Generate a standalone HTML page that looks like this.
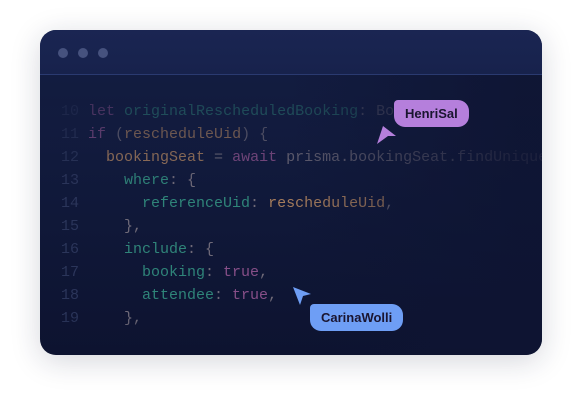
<!DOCTYPE html><html><head><style>
body{margin:0;width:582px;height:406px;background:#fff;position:relative;overflow:hidden;font-family:"Liberation Sans",sans-serif}
.win{position:absolute;left:40px;top:30px;width:502px;height:325px;border-radius:16px;background:linear-gradient(180deg,#16214a 0%,#111a3c 40%,#0d1330 100%);box-shadow:0 6px 30px rgba(20,30,60,.18);overflow:hidden}
.hd{height:44px;border-bottom:1px solid #2a3a70;background:linear-gradient(180deg,#1a2552,#17224c)}
.dot{position:absolute;top:18px;width:10px;height:10px;border-radius:50%;background:#46527e}
.code{position:absolute;left:0;top:70px;font-family:"Liberation Mono",monospace;font-size:15px;line-height:23px;white-space:pre;color:#6f6a78}
.n{display:inline-block;width:39px;text-align:right;color:#2b355a}
.k{color:#874f88}.t{color:#2f8479}.o{color:#a57c5c}.g{color:#6f6a78}
.fade{position:absolute;left:0;right:0;top:45px;bottom:0;background:linear-gradient(90deg,rgba(14,20,50,0) 50%,rgba(14,20,50,.8) 95%),linear-gradient(180deg,rgba(17,26,60,.6) 10%,rgba(17,26,60,.3) 25%,rgba(17,26,60,0) 40%,rgba(14,20,48,0) 85%,rgba(13,19,48,.45) 100%);pointer-events:none}
.b{position:absolute;font-size:13px;font-weight:bold;color:#1a1530;padding:0 11px;height:27px;line-height:27px;border-radius:11px}
</style></head><body>
<div class="win"><div class="hd"></div>
<div class="dot" style="left:18px"></div><div class="dot" style="left:38px"></div><div class="dot" style="left:58px"></div>
<div class="code"><span class="n">10</span> <span class="k">let</span> <span class="t">originalRescheduledBooking</span>: <span class="g">Booking</span>
<span class="n">11</span> <span class="k">if</span> (<span class="o">rescheduleUid</span>) {
<span class="n">12</span>   <span class="o">bookingSeat</span> = <span class="k">await</span> prisma.bookingSeat.findUnique
<span class="n">13</span>     <span class="t">where</span>: {
<span class="n">14</span>       <span class="t">referenceUid</span>: <span class="o">rescheduleUid</span>,
<span class="n">15</span>     },
<span class="n">16</span>     <span class="t">include</span>: {
<span class="n">17</span>       <span class="t">booking</span>: <span class="k">true</span>,
<span class="n">18</span>       <span class="t">attendee</span>: <span class="k">true</span>,
<span class="n">19</span>     },</div>
<div class="fade"></div>
</div>
<svg style="position:absolute;left:374px;top:124px" width="24" height="22"><path d="M9 2 L22 12 L14 12 L3 20 Z" fill="#b57fdc"/></svg>
<div class="b" style="left:394px;top:100px;background:#b57fdc;border-top-left-radius:4px">HenriSal</div>
<svg style="position:absolute;left:290px;top:284px" width="24" height="24"><path d="M3 3 L21 10 L13 12 L10 21 Z" fill="#6e9ef5"/></svg>
<div class="b" style="left:310px;top:304px;background:#6e9ef5;border-top-left-radius:4px">CarinaWolli</div>
</body></html>
